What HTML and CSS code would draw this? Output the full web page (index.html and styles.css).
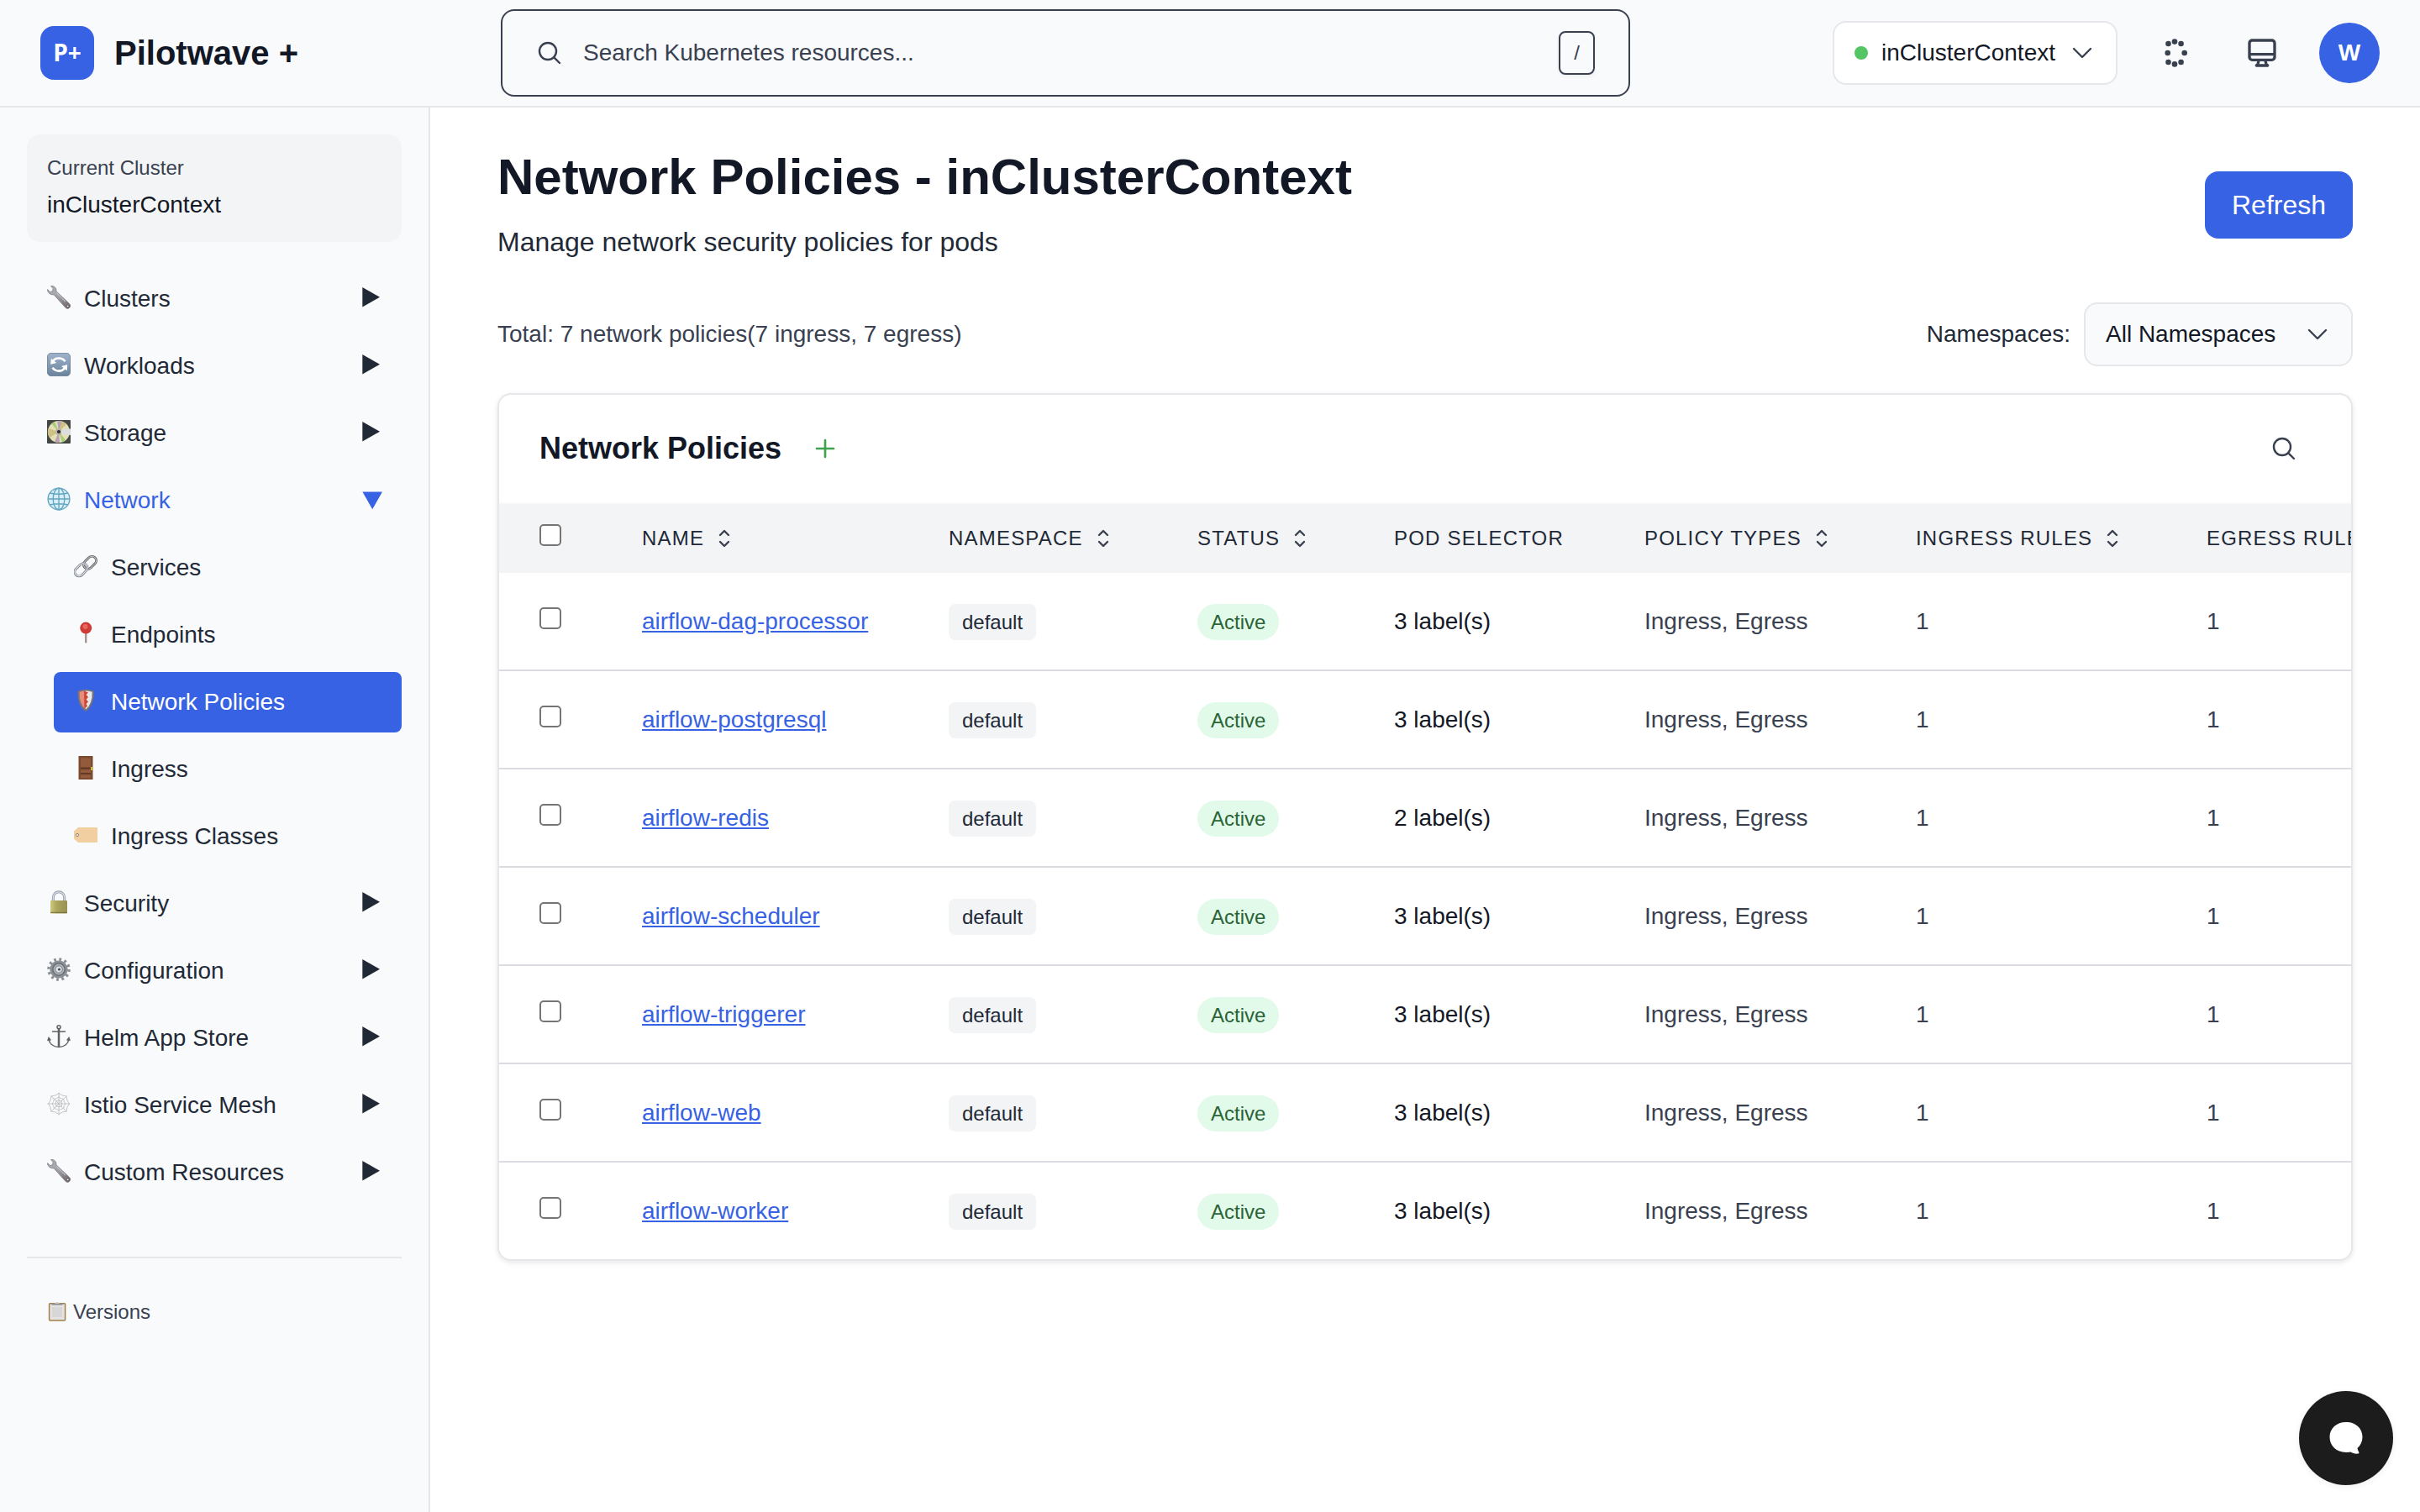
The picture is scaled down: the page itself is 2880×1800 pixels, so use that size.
FILE: index.html
```html
<!DOCTYPE html>
<html lang="en">
<head>
<meta charset="utf-8">
<title>Network Policies - inClusterContext</title>
<link rel="stylesheet" href="styles.css">
</head>
<body>
<svg class="sprite" aria-hidden="true">
  <defs>
    <linearGradient id="steel" x1="0" y1="0" x2="1" y2="1"><stop offset="0" stop-color="#b4b9c4"/><stop offset=".5" stop-color="#9c9aa0"/><stop offset="1" stop-color="#6d6262"/></linearGradient>
    <linearGradient id="tile" x1="0" y1="0" x2="0" y2="1"><stop offset="0" stop-color="#9fb4cc"/><stop offset="1" stop-color="#6a829b"/></linearGradient>
    <linearGradient id="brass" x1="0" y1="0" x2="1" y2="0"><stop offset="0" stop-color="#cdc87a"/><stop offset=".4" stop-color="#aaa45c"/><stop offset="1" stop-color="#999055"/></linearGradient>
    <symbol id="i-search" viewBox="0 0 24 24"><path d="m21 21-5.197-5.197m0 0A7.5 7.5 0 1 0 5.196 5.196a7.5 7.5 0 0 0 10.607 10.607Z"/></symbol>
    <symbol id="i-down" viewBox="0 0 24 24"><path d="m19.5 8.25-7.5 7.5-7.5-7.5"/></symbol>
    <symbol id="i-sort" viewBox="0 0 24 24"><path d="M8.25 15 12 18.75 15.75 15m-7.5-6L12 5.25 15.75 9"/></symbol>
    <symbol id="i-right-tri" viewBox="0 0 24 24"><path d="M.3 0v23.6L21 11.8Z"/></symbol>
    <symbol id="i-down-tri" viewBox="0 0 24 24"><path d="M.4 1.5H24L12.2 22.2Z"/></symbol>
    <symbol id="i-wrench" viewBox="0 0 28 28">
      <path d="M.6 4.600 3.600 7.600 6.600 6.600 7.200 3.600 4.600.6C8.200 0 11.400 2.600 10.900 6.800L26.400 21.400A3.300 3.300 0 0 1 22.200 26.600L8.200 10.800C4.500 11.300.4 8.800.6 4.600Z" fill="url(#steel)" stroke="#77777f" stroke-width=".8"/>
      <path d="M11 8.500 22 19.300" stroke="#d7d5d7" stroke-width="1"/>
      <circle cx="24.700" cy="24.400" r="1.300" fill="#f9fafc" stroke="#5e5455" stroke-width="1"/>
    </symbol>
    <symbol id="i-cycle" viewBox="0 0 28 28">
      <rect x=".4" y=".4" width="27.200" height="27.200" rx="4.500" fill="url(#tile)" stroke="#60758c" stroke-width=".8"/>
      <path d="M6.500 10.500C9.500 5.500 17.500 5 21.500 10.200M21.500 17.500C18 23 10.500 23 6.500 17.800" fill="none" stroke="#fff" stroke-width="2.700"/>
      <path d="M4.200 13.800 4.800 6.800 11.200 12ZM24.200 14 23.800 21.300 17 16Z" fill="#fff"/>
    </symbol>
    <symbol id="i-disk" viewBox="0 0 28 28">
      <rect width="28" height="28" rx="1" fill="#454744"/>
      <circle cx="14" cy="14" r="13" fill="#e4dfb4"/>
      <path d="M14 14 5.500 4.500A13 13 0 0 1 9 2ZM14 14 22 24A13 13 0 0 1 18 26.400Z" fill="#a3cc7c"/>
      <path d="M14 14 12 1.200A13 13 0 0 1 18 1.600ZM14 14 9 26A13 13 0 0 0 15 27Z" fill="#b9a3b2"/>
      <path d="M14 14 1.500 10A13 13 0 0 0 3 21ZM14 14 18 1.600 23 5Z" fill="#cfc184"/>
      <circle cx="14" cy="14" r="4" fill="#b7b5a2"/><circle cx="14" cy="14" r="2" fill="#28272b"/>
      <path d="M17 11.500 28 10.500V18L17 16.500Z" fill="#dcdde0"/>
    </symbol>
    <symbol id="i-globe" viewBox="0 0 28 28">
      <g fill="#d9eff8" stroke="#62a5c2" stroke-width="1.350"><circle cx="14" cy="14" r="12.900"/>
      <ellipse cx="14" cy="14" rx="6.800" ry="12.900" fill="none"/><path d="M14 1v26M1 14h26M3.300 7Q14 9.500 24.700 7M3.300 21Q14 18.500 24.700 21" fill="none"/></g>
    </symbol>
    <symbol id="i-link" viewBox="0 0 28 28">
      <g fill="none"><rect x="10.500" y="4.700" width="17" height="10.200" rx="5.100" transform="rotate(-45 19 9.800)" stroke="#5f5b5c" stroke-width="2.800"/>
      <rect x="10.500" y="4.700" width="17" height="10.200" rx="5.100" transform="rotate(-45 19 9.800)" stroke="#c5cbd2" stroke-width="1"/>
      <rect x="0" y="13.300" width="17" height="10.200" rx="5.100" transform="rotate(-45 8.500 18.400)" stroke="#777c84" stroke-width="2.800"/>
      <rect x="0" y="13.300" width="17" height="10.200" rx="5.100" transform="rotate(-45 8.500 18.400)" stroke="#e4eaf2" stroke-width="1.200"/></g>
    </symbol>
    <symbol id="i-pin" viewBox="0 0 28 28">
      <path d="M13 12h2.400v12.500L14.200 26 13 24.500Z" fill="#a4948f"/><circle cx="14.200" cy="7.600" r="7" fill="#cf3b35"/><circle cx="13.500" cy="6" r="3" fill="#e56b62"/>
    </symbol>
    <symbol id="i-shield" viewBox="0 0 28 28">
      <path d="M14 .8Q19 .8 23.500 2.500 24.500 20 14 27 3.500 20 4.700 2.500 9 .8 14 .8Z" fill="#777476"/>
      <path d="M14 2.500Q10 2.500 6.500 3.800 6 18.500 14 24.500Z" fill="#e98a7b"/>
      <path d="M14 2.500Q18 2.500 21.700 3.800 22 18.500 14 24.500Z" fill="#e8e8e8"/>
      <path d="M12 2.600 17 4.500 14.500 7 17 10 14.500 12.500 17 15.500 14.500 18 16 20.500 12.500 23.500Z" fill="#cc4536"/>
    </symbol>
    <symbol id="i-door" viewBox="0 0 28 28">
      <path d="M5.500 0h17v28h-17Z" fill="#7b4a30"/><path d="M8 2.500h12v10.500H8ZM8 16.500h12v3.500H8ZM8 22.500h12V26H8Z" fill="#935b3c"/><path d="M8 14.700h12M8 20.800h12" stroke="#55301f"/><path d="M20 13h2.500v4H20Z" fill="#d0bc45"/>
    </symbol>
    <symbol id="i-label" viewBox="0 0 28 28">
      <path d="M5 5H27a1 1 0 0 1 1 1V22a1 1 0 0 1-1 1H5L0 18.500v-9Z" fill="#f2cfa0"/><circle cx="3.900" cy="14" r="1.600" fill="#fff" stroke="#8d7a6c"/>
    </symbol>
    <symbol id="i-lock" viewBox="0 0 28 28">
      <path d="M7.300 13V8.500a6.700 6.700 0 0 1 13.400 0V13" fill="none" stroke="#8f99a5" stroke-width="3"/><path d="M7.300 13V8.500a6.700 6.700 0 0 1 13.400 0V13" fill="none" stroke="#d3dae2" stroke-width="1.300"/>
      <rect x="4" y="12" width="20" height="15.500" rx="1" fill="url(#brass)"/><path d="M4 26.300h20" stroke="#766e3f"/>
    </symbol>
    <symbol id="i-gear" viewBox="0 0 28 28">
      <circle cx="14" cy="14" r="12" fill="none" stroke="#8b8e93" stroke-width="3.600" stroke-dasharray="2.800 3.483"/>
      <circle cx="14" cy="14" r="10.600" fill="#8c9198"/><circle cx="14" cy="14" r="7.200" fill="#b0b5bc" stroke="#666c74" stroke-width="1.500"/><circle cx="14" cy="14" r="4.200" fill="#dde2e7" stroke="#737b83"/><circle cx="14.500" cy="14" r="1.600" fill="#474c54"/>
    </symbol>
    <symbol id="i-anchor" viewBox="0 0 28 28">
      <g fill="none" stroke="#606060" stroke-width="1.500" stroke-linecap="round"><circle cx="14" cy="2.800" r="2"/><path d="M6.500 8h15"/><path d="M14 5v20" stroke-width="2.500"/><path d="M2 17Q3.500 26 14 26.500 24.500 26 26 17M1 18.500 2 15.500 4 18M27 18.500 26 15.500 24 18"/></g>
    </symbol>
    <symbol id="i-web" viewBox="0 0 28 28">
      <g fill="none" stroke="#c2c4c5" stroke-width="1"><path d="M14 .5v27M.5 14h27M4.500 4.500l19 19M23.500 4.500l-19 19"/>
      <path d="M14 1.500Q18 5 23 5 23 10 26.500 14 23 18 23 23 18 23 14 26.500 10 23 5 23 5 18 1.500 14 5 10 5 5 10 5 14 1.500Z"/>
      <path d="M14 6Q16.500 8.300 19.700 8.300 19.700 11.500 22 14 19.700 16.500 19.700 19.700 16.500 19.700 14 22 11.500 19.700 8.300 19.700 8.300 16.500 6 14 8.300 11.500 8.300 8.300 11.500 8.300 14 6Z"/>
      <path d="M14 10 17 11 18 14 17 17 14 18 11 17 10 14 11 11Z"/></g>
    </symbol>
    <symbol id="i-clip" viewBox="0 0 24 24">
      <rect x="2.600" y="2.800" width="19" height="20.200" rx="1" fill="#e3e3e4" stroke="#a37f4b" stroke-width="1.500"/><path d="M6 7h12v12H6Z" fill="#d7d7d8"/><path d="M5.500 2.800h13v2h-13Z" fill="#96999c"/><path d="M9 3Q12-1 15 3Z" fill="#c6c9cc"/>
    </symbol>
  </defs>
</svg>

<header class="topbar">
  <div class="brand"><span class="brand-mark">P+</span><span class="brand-name">Pilotwave +</span></div>
  <div class="search">
    <svg class="icon"><use href="#i-search"/></svg>
    <span class="search-text">Search Kubernetes resources...</span>
    <kbd>/</kbd>
  </div>
  <div class="tools">
    <div class="context"><span class="dot"></span><span>inClusterContext</span><svg class="icon"><use href="#i-down"/></svg></div>
    <div class="tool">
      <svg class="dots" viewBox="0 0 40 40"><circle cx="20" cy="6.600" r="3.300"/><circle cx="12.500" cy="9" r="3.300"/><circle cx="27.600" cy="9" r="3.300"/><circle cx="11.700" cy="20" r="3.300"/><circle cx="31.700" cy="20" r="3.300"/><circle cx="12.500" cy="31" r="3.300"/><circle cx="27.600" cy="31" r="3.300"/><circle cx="20" cy="33.400" r="3.300"/></svg>
    </div>
    <div class="tool">
      <svg class="icon desktop" viewBox="0 0 24 24"><path d="M9.750 17 9 20l-1 1h8l-1-1-.75-3M3 13h18M5 17h14a2 2 0 0 0 2-2V5a2 2 0 0 0-2-2H5a2 2 0 0 0-2 2v10a2 2 0 0 0 2 2z"/></svg>
    </div>
    <div class="avatar">W</div>
  </div>
</header>

<div class="shell">
  <aside class="sidebar">
    <div class="cluster"><div class="cluster-label">Current Cluster</div><div class="cluster-name">inClusterContext</div></div>
    <nav class="nav">
      <a class="item"><svg class="emoji"><use href="#i-wrench"/></svg><span>Clusters</span><svg class="tri"><use href="#i-right-tri"/></svg></a>
      <a class="item"><svg class="emoji"><use href="#i-cycle"/></svg><span>Workloads</span><svg class="tri"><use href="#i-right-tri"/></svg></a>
      <a class="item"><svg class="emoji"><use href="#i-disk"/></svg><span>Storage</span><svg class="tri"><use href="#i-right-tri"/></svg></a>
      <a class="item open"><svg class="emoji"><use href="#i-globe"/></svg><span>Network</span><svg class="tri"><use href="#i-down-tri"/></svg></a>
      <div class="sub">
        <a class="item"><svg class="emoji"><use href="#i-link"/></svg><span>Services</span></a>
        <a class="item"><svg class="emoji"><use href="#i-pin"/></svg><span>Endpoints</span></a>
        <a class="item active"><svg class="emoji"><use href="#i-shield"/></svg><span>Network Policies</span></a>
        <a class="item"><svg class="emoji"><use href="#i-door"/></svg><span>Ingress</span></a>
        <a class="item"><svg class="emoji"><use href="#i-label"/></svg><span>Ingress Classes</span></a>
      </div>
      <a class="item"><svg class="emoji"><use href="#i-lock"/></svg><span>Security</span><svg class="tri"><use href="#i-right-tri"/></svg></a>
      <a class="item"><svg class="emoji"><use href="#i-gear"/></svg><span>Configuration</span><svg class="tri"><use href="#i-right-tri"/></svg></a>
      <a class="item"><svg class="emoji"><use href="#i-anchor"/></svg><span>Helm App Store</span><svg class="tri"><use href="#i-right-tri"/></svg></a>
      <a class="item"><svg class="emoji"><use href="#i-web"/></svg><span>Istio Service Mesh</span><svg class="tri"><use href="#i-right-tri"/></svg></a>
      <a class="item"><svg class="emoji"><use href="#i-wrench"/></svg><span>Custom Resources</span><svg class="tri"><use href="#i-right-tri"/></svg></a>
    </nav>
    <div class="versions"><svg class="clip"><use href="#i-clip"/></svg><span>Versions</span></div>
  </aside>

  <main class="main">
    <div class="page-head">
      <div><h1>Network Policies - inClusterContext</h1><p class="subtitle">Manage network security policies for pods</p></div>
      <button class="refresh">Refresh</button>
    </div>
    <div class="filters">
      <span class="total">Total: 7 network policies(7 ingress, 7 egress)</span>
      <div class="ns"><span>Namespaces:</span><div class="select"><span>All Namespaces</span><svg class="icon"><use href="#i-down"/></svg></div></div>
    </div>
    <section class="card">
      <div class="card-head">
        <h2>Network Policies</h2>
        <svg class="icon plus" viewBox="0 0 24 24"><path d="M12 4.500v15m7.500-7.500h-15"/></svg>
        <svg class="icon find"><use href="#i-search"/></svg>
      </div>
      <table>
        <colgroup><col class="c-check"><col class="c-name"><col class="c-ns"><col class="c-status"><col class="c-pod"><col class="c-types"><col class="c-in"><col class="c-out"></colgroup>
        <thead><tr>
          <th><span class="box"></span></th>
          <th><div class="th">NAME<svg class="icon"><use href="#i-sort"/></svg></div></th>
          <th><div class="th">NAMESPACE<svg class="icon"><use href="#i-sort"/></svg></div></th>
          <th><div class="th">STATUS<svg class="icon"><use href="#i-sort"/></svg></div></th>
          <th><div class="th">POD SELECTOR</div></th>
          <th><div class="th">POLICY TYPES<svg class="icon"><use href="#i-sort"/></svg></div></th>
          <th><div class="th">INGRESS RULES<svg class="icon"><use href="#i-sort"/></svg></div></th>
          <th><div class="th">EGRESS RULES</div></th>
        </tr></thead>
        <tbody>
          <tr><td><span class="box"></span></td><td><a class="link">airflow-dag-processor</a></td><td><span class="tag">default</span></td><td><span class="tag ok">Active</span></td><td class="strong">3 label(s)</td><td>Ingress, Egress</td><td>1</td><td>1</td></tr>
          <tr><td><span class="box"></span></td><td><a class="link">airflow-postgresql</a></td><td><span class="tag">default</span></td><td><span class="tag ok">Active</span></td><td class="strong">3 label(s)</td><td>Ingress, Egress</td><td>1</td><td>1</td></tr>
          <tr><td><span class="box"></span></td><td><a class="link">airflow-redis</a></td><td><span class="tag">default</span></td><td><span class="tag ok">Active</span></td><td class="strong">2 label(s)</td><td>Ingress, Egress</td><td>1</td><td>1</td></tr>
          <tr><td><span class="box"></span></td><td><a class="link">airflow-scheduler</a></td><td><span class="tag">default</span></td><td><span class="tag ok">Active</span></td><td class="strong">3 label(s)</td><td>Ingress, Egress</td><td>1</td><td>1</td></tr>
          <tr><td><span class="box"></span></td><td><a class="link">airflow-triggerer</a></td><td><span class="tag">default</span></td><td><span class="tag ok">Active</span></td><td class="strong">3 label(s)</td><td>Ingress, Egress</td><td>1</td><td>1</td></tr>
          <tr><td><span class="box"></span></td><td><a class="link">airflow-web</a></td><td><span class="tag">default</span></td><td><span class="tag ok">Active</span></td><td class="strong">3 label(s)</td><td>Ingress, Egress</td><td>1</td><td>1</td></tr>
          <tr><td><span class="box"></span></td><td><a class="link">airflow-worker</a></td><td><span class="tag">default</span></td><td><span class="tag ok">Active</span></td><td class="strong">3 label(s)</td><td>Ingress, Egress</td><td>1</td><td>1</td></tr>
        </tbody>
      </table>
    </section>
  </main>
</div>

<button class="chat" aria-label="Chat">
  <svg viewBox="0 0 40 40"><path d="M20 1C31.500 1 39.500 8.500 39.500 18.800 39.500 24 37.400 28.700 33.500 32 33.800 33.800 34.400 35 35.200 36.500 35.700 37.800 35.300 38.500 34 38.600 30.500 38.900 28 38 25.500 36.500 23.800 36.800 22 37 20 37 8.500 37 .5 29 .5 18.800.5 8.500 8.500 1 20 1Z"/></svg>
</button>
</body>
</html>
```
FILE: styles.css
```css
* { box-sizing: border-box; }
body {
  margin: 0;
  height: 1800px;
  overflow: hidden;
  display: flex;
  flex-direction: column;
  font: 28px/40px "Liberation Sans", Arial, sans-serif;
  color: #131826;
  background: #fff;
}
h1, h2, p { margin: 0; }
button { border: 0; padding: 0; font: inherit; }
.sprite { position: absolute; width: 0; height: 0; }
.icon {
  width: 32px;
  height: 32px;
  flex: none;
  fill: none;
  stroke: #394150;
  stroke-width: 1.8;
  stroke-linecap: round;
  stroke-linejoin: round;
}

/* Top bar */
.topbar {
  height: 128px;
  flex: none;
  display: flex;
  align-items: center;
  padding: 0 48px;
  background: #f9fafc;
  border-bottom: 2px solid #e5e7ea;
}
.brand { width: 548px; flex: none; display: flex; align-items: center; gap: 24px; }
.brand-mark {
  width: 64px;
  height: 64px;
  border-radius: 16px;
  background: #3762e3;
  color: #fff;
  font: 700 28px/62px "Open Sans", sans-serif;
  text-align: center;
}
.brand-name { font-size: 40px; font-weight: 700; }
.search {
  width: 1344px;
  height: 104px;
  display: flex;
  align-items: center;
  gap: 24px;
  padding: 0 40px;
  border: 2px solid #394150;
  border-radius: 16px;
  color: #394150;
}
.search-text { flex: 1; }
kbd {
  width: 43px;
  height: 52px;
  border: 2px solid #394150;
  border-radius: 8px;
  font: 24px/48px "Liberation Sans", sans-serif;
  text-align: center;
  box-shadow: 0 2px 4px rgba(0, 0, 0, .06);
}
.tools { margin-left: auto; display: flex; align-items: center; gap: 32px; }
.context {
  height: 76px;
  display: flex;
  align-items: center;
  gap: 16px;
  padding: 0 24px;
  border: 2px solid #e5e7ea;
  border-radius: 16px;
  background: #fff;
}
.dot { width: 16px; height: 16px; border-radius: 50%; background: #53c562; }
.tool { width: 72px; display: flex; justify-content: center; }
.dots { width: 40px; height: 40px; fill: #394150; }
.desktop { width: 40px; height: 40px; stroke-width: 2; }
.avatar {
  width: 72px;
  height: 72px;
  border-radius: 50%;
  background: #3762e3;
  color: #fff;
  font-weight: 700;
  line-height: 72px;
  text-align: center;
}

/* Sidebar */
.shell { flex: 1; display: flex; min-height: 0; }
.sidebar {
  width: 512px;
  flex: none;
  padding: 32px;
  background: #f9fafc;
  border-right: 2px solid #e5e7ea;
}
.cluster { height: 128px; padding: 20px 24px; border-radius: 16px; background: #f3f4f6; }
.cluster-label { font-size: 24px; color: #394150; }
.cluster-name { padding-top: 4px; }
.nav, .sub { display: flex; flex-direction: column; gap: 8px; }
.nav { padding-top: 32px; }
.sub { padding-left: 32px; }
.item {
  height: 72px;
  display: flex;
  align-items: center;
  gap: 16px;
  padding: 0 23px 0 24px;
  border-radius: 8px;
  color: #222936;
}
.item span { flex: 1; white-space: nowrap; }
.emoji { width: 28px; height: 28px; margin-bottom: 4px; }
.tri { width: 24px; height: 24px; margin-bottom: 4px; fill: currentColor; }
.open { color: #3762e3; }
.open .tri { margin-bottom: 0; }
.active { background: #3762e3; color: #fff; }
.versions {
  margin-top: 64px;
  padding: 44px 24px 0;
  display: flex;
  align-items: center;
  gap: 7px;
  border-top: 2px solid #e5e7ea;
  font-size: 24px;
  color: #394150;
}
.clip { width: 24px; height: 24px; margin-bottom: 2px; }

/* Page */
.main { flex: 1; min-width: 0; padding: 48px 80px; }
.page-head { display: flex; justify-content: space-between; align-items: center; height: 136px; }
h1 { font-size: 60px; line-height: 70px; }
.subtitle { padding: 22px 0 4px; font-size: 32px; color: #222936; }
.refresh {
  width: 176px;
  height: 80px;
  border-radius: 16px;
  background: #3762e3;
  color: #fff;
  font-size: 32px;
}
.filters { margin-top: 48px; height: 76px; display: flex; justify-content: space-between; align-items: center; }
.total { color: #394150; }
.ns { display: flex; align-items: center; gap: 16px; color: #222936; }
.select {
  width: 320px;
  height: 76px;
  display: flex;
  justify-content: space-between;
  align-items: center;
  padding: 0 24px;
  border: 2px solid #e5e7ea;
  border-radius: 16px;
  background: #f9fafc;
  color: #131826;
}

/* Table card */
.card {
  margin-top: 32px;
  border: 2px solid #e5e7ea;
  border-radius: 16px;
  overflow: hidden;
  box-shadow: 0 2px 6px rgba(0, 0, 0, .1);
}
.card-head { height: 130px; display: flex; align-items: center; padding: 0 64px 0 48px; border-bottom: 2px solid #f9fafc; }
h2 { font-size: 36px; line-height: 48px; }
.plus { margin-left: 36px; stroke: #3fa24f; stroke-width: 2; }
.find { margin-left: auto; }
table { width: 2340px; table-layout: fixed; border-collapse: separate; border-spacing: 0; }
.c-check { width: 122px; }
.c-name { width: 365px; }
.c-ns { width: 296px; }
.c-status { width: 234px; }
.c-pod { width: 298px; }
.c-types { width: 323px; }
.c-in { width: 346px; }
th, td { padding: 0 48px; text-align: left; vertical-align: middle; white-space: nowrap; }
th:first-child, td:first-child { padding-right: 0; }
th { height: 82px; background: #f3f4f6; font-size: 24px; font-weight: 400; letter-spacing: 1.2px; color: #222936; }
.th { display: flex; align-items: center; gap: 8px; }
td { height: 117px; border-bottom: 2px solid #dbdce1; color: #394150; }
tr:last-child td { height: 115px; border-bottom: 0; }
.box {
  display: block;
  width: 26px;
  height: 26px;
  margin-bottom: 7px;
  border: 2px solid #757575;
  border-radius: 5px;
  background: #fff;
}
th .box { margin-bottom: 8px; }
.link { color: #3762e3; text-decoration: underline; }
.strong { color: #131826; }
.tag {
  display: block;
  width: fit-content;
  height: 43px;
  margin-top: 2px;
  padding: 0 16px;
  border-radius: 8px;
  background: #f3f4f6;
  font-size: 24px;
  line-height: 43px;
  color: #222936;
}
.ok { border-radius: 22px; background: #e2fae9; color: #2b6338; }

.chat {
  position: absolute;
  left: 2736px;
  top: 1656px;
  width: 112px;
  height: 112px;
  border-radius: 50%;
  background: #1c1c1c;
  box-shadow: 0 2px 8px rgba(0, 0, 0, .06);
  display: flex;
  align-items: center;
  justify-content: center;
}
.chat svg { width: 40px; height: 40px; fill: #fff; }
```
